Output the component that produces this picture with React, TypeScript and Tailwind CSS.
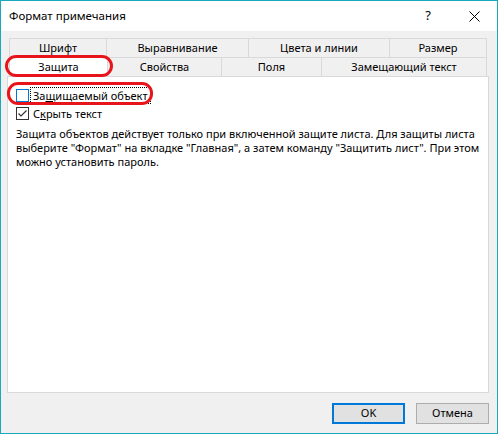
import React from 'react';

const font = "font-['Noto_Sans',sans-serif]";

interface TabProps {
  label: string;
  width: string;
  selected?: boolean;
}

const Tab: React.FC<TabProps> = ({ label, width, selected }) => (
  <div
    className={`${width} h-full flex items-center justify-center border-t border-r border-[#d9d9d9] first:border-l ${
      selected ? 'bg-white' : 'bg-[#f0f0f0]'
    }`}
  >
    {label}
  </div>
);

const Checkbox: React.FC<{ checked?: boolean; focused?: boolean; children: React.ReactNode }> = ({
  checked,
  focused,
  children,
}) => (
  <div className="flex items-center h-[17px]">
    <div
      className={`w-[13px] h-[13px] border bg-white flex items-center justify-center ${
        focused ? 'border-[#0078d7]' : 'border-[#333]'
      }`}
    >
      {checked && (
        <svg width="11" height="11" viewBox="0 0 11 11">
          <path d="M1.5 5.5 L4 8 L9.5 2.5" fill="none" stroke="#333" strokeWidth="1.2" />
        </svg>
      )}
    </div>
    <span
      className={`ml-[2px] px-[2px] leading-[15px] ${
        focused ? 'outline outline-1 outline-dotted outline-black' : ''
      }`}
    >
      {children}
    </span>
  </div>
);

export default function App() {
  return (
    <div className={`w-[498px] h-[434px] flex flex-col border border-[#1aa8bf] bg-white text-[11px] text-black ${font}`}>
      {/* title bar */}
      <div className="h-[30px] flex items-center bg-white">
        <span className="ml-[8px] text-[11.5px] flex-1">Формат примечания</span>
        <span className="w-[20px] text-center text-[13px] mr-[31px]">?</span>
        <svg width="11" height="11" viewBox="0 0 11 11" className="mr-[17px]">
          <path d="M0.5 0.5 L10.5 10.5 M10.5 0.5 L0.5 10.5" stroke="#000" strokeWidth="1" />
        </svg>
      </div>

      <div className="flex-1 bg-[#f0f0f0] pt-[7px] pl-[6px] pr-[8px] flex flex-col">
        <div className="relative">
          {/* tabs */}
          <div className="mx-[2px] flex flex-col">
            <div className="h-[19px] flex">
              <Tab label="Шрифт" width="w-[98px]" />
              <Tab label="Выравнивание" width="w-[142px]" />
              <Tab label="Цвета и линии" width="w-[141px]" />
              <Tab label="Размер" width="flex-1" />
            </div>
            <div className="h-[19px] flex">
              <Tab label="Защита" width="w-[99px]" selected />
              <Tab label="Свойства" width="w-[114px]" />
              <Tab label="Поля" width="w-[100px]" />
              <Tab label="Замещающий текст" width="flex-1" />
            </div>
          </div>

          {/* panel */}
          <div className="h-[317px] border border-[#d9d9d9] bg-white pl-[8px] pr-[8px] pt-[10px]">
            <Checkbox focused>
              За<span className="underline">щ</span>ищаемый объект
            </Checkbox>
            <div className="mt-[1px]">
              <Checkbox checked>
                С<span className="underline">к</span>рыть текст
              </Checkbox>
            </div>
            <p className="mt-[5px] leading-[14px]">
              Защита объектов действует только при включенной защите листа. Для защиты листа выберите "Формат" на вкладке "Главная", а затем команду "Защитить лист". При этом можно установить пароль.
            </p>
          </div>

          {/* red annotation marks */}
          <div className="absolute left-[-2px] top-[17px] w-[108px] h-[22px] border-[3px] border-[#e8141b] rounded-[11px]" />
          <div className="absolute left-[0px] top-[44px] w-[146px] h-[23px] border-[3px] border-[#e8141b] rounded-[11px]" />
        </div>

        {/* buttons */}
        <div className="mt-[10px] flex justify-end gap-[11px]">
          <button className="w-[73px] h-[21px] border-2 border-[#0078d7] bg-[#e1e1e1] flex items-center justify-center">
            OK
          </button>
          <button className="w-[73px] h-[21px] border border-[#adadad] bg-[#e1e1e1] flex items-center justify-center">
            Отмена
          </button>
        </div>
      </div>
    </div>
  );
}
